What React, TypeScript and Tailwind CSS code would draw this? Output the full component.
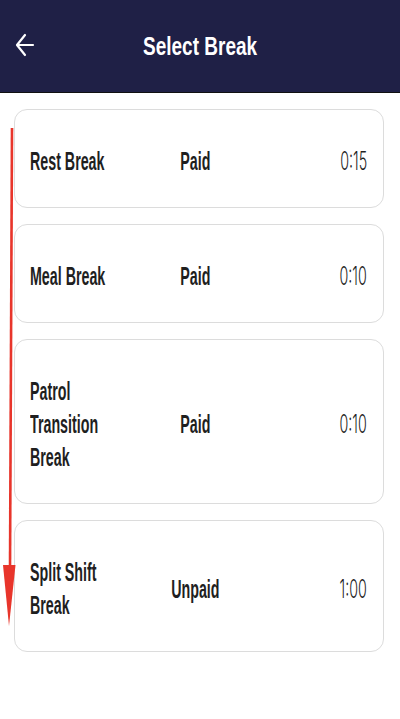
import React from "react";

interface BreakItem {
  name: string;
  pay: string;
  time: string;
}

const breaks: BreakItem[] = [
  { name: "Rest Break", pay: "Paid", time: "0:15" },
  { name: "Meal Break", pay: "Paid", time: "0:10" },
  { name: "Patrol Transition Break", pay: "Paid", time: "0:10" },
  { name: "Split Shift Break", pay: "Unpaid", time: "1:00" },
];

const BackArrow: React.FC = () => (
  <svg width="20" height="24" viewBox="0 0 20 24" fill="none">
    <path
      d="M2 12H18M10 2L2 12L10 22"
      stroke="white"
      strokeWidth="2.2"
      strokeLinecap="round"
      strokeLinejoin="round"
    />
  </svg>
);

const BreakCard: React.FC<{ item: BreakItem }> = ({ item }) => (
  <div className="rounded-[13px] border border-[#dcdcdc] bg-white pl-[15px] pr-[16px] pt-[35px] pb-[29px]">
    <div className="grid grid-cols-[104px_1fr_111px] items-center">
      <div className="flex">
        <span className="block w-[172px] shrink-0 origin-left scale-x-[0.57] text-[25px] leading-[33px] font-bold text-[#1f1f1f]">
          {item.name}
        </span>
      </div>
      <div className="flex justify-center">
        <span className="block origin-center scale-x-[0.57] text-[25px] leading-[33px] font-bold text-[#1f1f1f]">
          {item.pay}
        </span>
      </div>
      <div className="flex justify-end">
        <span className="block origin-right scale-x-[0.57] font-['Inter'] text-[25px] leading-[33px] font-light text-[#1f1f1f]">
          {item.time}
        </span>
      </div>
    </div>
  </div>
);

export default function App() {
  return (
    <div className="relative min-h-[719px] bg-white font-['Liberation_Sans',sans-serif]">
      <header className="grid h-[93px] grid-cols-[48px_1fr_48px] items-center border-b border-[#111] bg-[#1f2046]">
        <div className="flex pl-[15px] pb-[3px]">
          <BackArrow />
        </div>
        <h1 className="flex justify-center pt-[2px]">
          <span className="inline-block origin-center scale-x-[0.76] text-[25px] font-bold text-white">
            Select Break
          </span>
        </h1>
        <div />
      </header>

      <div className="flex flex-col gap-[16px] pl-[14px] pr-[16px] pt-[16px]">
        {breaks.map((b) => (
          <BreakCard key={b.name} item={b} />
        ))}
      </div>

      {/* red scroll annotation */}
      <svg
        className="pointer-events-none absolute left-0 top-0"
        width="24"
        height="719"
        viewBox="0 0 24 719"
      >
        <path d="M12 128L10 570" stroke="#e8352b" strokeWidth="2.6" />
        <path d="M3 565L15.5 565L9 626Z" fill="#e8352b" />
      </svg>
    </div>
  );
}
